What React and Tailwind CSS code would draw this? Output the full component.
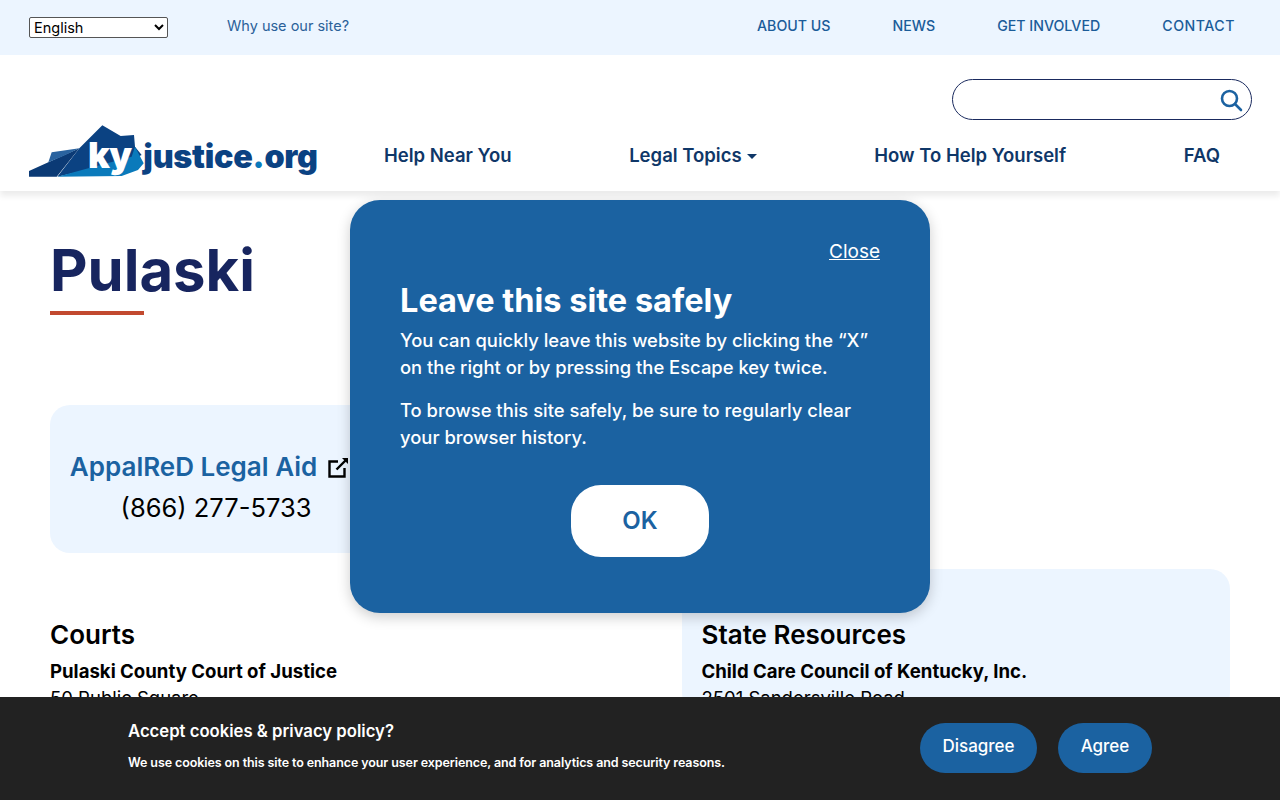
import React from 'react';

const Logo = () => (
    <svg width="292" height="53" viewBox="87 375 876 159" aria-label="kyjustice.org" className="shrink-0">
        {/* state shape */}
        <polygon points="87,530 87,513 145,487 238,445 170,530" fill="#0b3a75" />
        <polygon points="145,487 155,457 238,445 190,468" fill="#2a639f" />
        <polygon points="172,530 238,445 307,376 362,408 402,405 405,440 425,465 350,500 260,510" fill="#0b4282" />
        <polygon points="172,530 265,505 395,470 405,440 431,490 414,510 365,528" fill="#0a7abb" />
        <text x="264" y="505" fontFamily="Inter, sans-serif" fontWeight="900" fontSize="108" letterSpacing="-3" fill="#fff">ky</text>
        <text x="430" y="503" fontFamily="Inter, sans-serif" fontWeight="900" fontSize="97" letterSpacing="-0.8" fill="#0b4282">
            justice<tspan fill="#0a7abb">.</tspan>org
        </text>
    </svg>
);

const SearchIcon = () => (
    <svg width="24" height="24" viewBox="0 0 24 24" fill="none" stroke="#1b62a1" strokeWidth="2.6" strokeLinecap="round">
        <circle cx="10.5" cy="10.5" r="7.5" />
        <path d="M16 16l6 6" />
    </svg>
);

const ExternalIcon = () => (
    <svg width="22" height="22" viewBox="0 0 22 22" fill="none" stroke="#000" strokeWidth="2.4" className="shrink-0">
        <path d="M10 5.5H1.5v15h15V12" />
        <path d="M8.5 13.5 19 3" />
        <path d="M14 2h6v6z" fill="#000" stroke="none" />
    </svg>
);

const topLinks = ['ABOUT US', 'NEWS', 'GET INVOLVED', 'CONTACT'];

export default function App() {
    return (
        <div className="relative h-screen overflow-hidden bg-white font-['Inter',sans-serif] text-black">
            {/* Top bar */}
            <div className="flex h-[55px] items-center justify-between bg-[#ecf5ff] pl-[29px] pr-[45px]">
                <div className="flex items-center gap-[59px]">
                    <select className="mb-[1px] w-[139px] rounded-[2px] border border-[#555] bg-white text-[14.5px] leading-[14px] text-black">
                        <option>English</option>
                    </select>
                    <a className="pb-[3px] text-[14.5px] text-[#2a6199]">Why use our site?</a>
                </div>
                <div className="flex items-center gap-[62px] pb-[3px]">
                    {topLinks.map((t) => (
                        <a key={t} className="text-[14.2px] font-medium text-[#1b5c99] last:tracking-[0.5px]">{t}</a>
                    ))}
                </div>
            </div>

            {/* Header */}
            <header className="relative z-10 bg-white pb-[13px] pl-[29px] pr-[28px] pt-[24px] shadow-[0_5px_6px_rgba(0,0,0,0.08)]">
                <div className="flex justify-end">
                    <div className="flex h-[41px] w-[300px] items-center justify-end rounded-full border border-[#1a2a5e] pr-[8px]">
                        <SearchIcon />
                    </div>
                </div>
                <div className="mt-[5px] flex h-[53px] items-center">
                    <Logo />
                    <nav className="ml-[63px] flex w-[836px] items-center justify-between pt-[9px] text-[18.5px] font-semibold text-[#0f3768]">
                        <a>Help Near You</a>
                        <a className="flex items-center gap-[5px]">
                            Legal Topics
                            <span className="h-0 w-0 border-x-[5px] border-t-[5px] border-x-transparent border-t-[#0f3768]"></span>
                        </a>
                        <a>How To Help Yourself</a>
                        <a>FAQ</a>
                    </nav>
                </div>
            </header>

            {/* Main content */}
            <main className="px-[50px]">
                <h1 className="pt-[49px] text-[58px] font-bold leading-[60px] text-[#17255f]">Pulaski</h1>
                <div className="mt-[11px] h-[4px] w-[94px] bg-[#c2492f]"></div>

                <div className="mt-[90px] flex h-[148px] w-[332px] flex-col items-center justify-center rounded-[20px] bg-[#ecf5ff] pt-[18px]">
                    <div className="mr-[12px] flex items-center gap-[11px]">
                        <a className="text-[26px] font-semibold leading-[32px] text-[#1b62a1]">AppalReD Legal Aid</a>
                        <ExternalIcon />
                    </div>
                    <p className="mt-[7px] text-[25.5px] leading-[36px]">(866) 277-5733</p>
                </div>

                <div className="mt-[16px] grid grid-cols-[632px_548px]">
                    <section className="pt-[51px]">
                        <h2 className="text-[26px] font-semibold leading-[30px]">Courts</h2>
                        <h3 className="mt-[9px] text-[18.6px] font-bold leading-[24px]">Pulaski County Court of Justice</h3>
                        <p className="text-[18.5px] leading-[30px]">50 Public Square</p>
                    </section>
                    <section className="rounded-[20px] bg-[#ecf5ff] pl-[19.5px] pr-[20px] pt-[51px]">
                        <h2 className="text-[26px] font-semibold leading-[30px]">State Resources</h2>
                        <h3 className="mt-[9px] text-[18.6px] font-bold leading-[24px]">Child Care Council of Kentucky, Inc.</h3>
                        <p className="text-[18.5px] leading-[30px]">2501 Sandersville Road</p>
                    </section>
                </div>
            </main>

            {/* Safety modal */}
            <div className="absolute left-[350px] top-[200px] z-20 h-[413px] w-[580px] rounded-[30px] bg-[#1b62a1] px-[50px] pt-[40px] text-white shadow-[0_4px_14px_rgba(0,0,0,0.2)]">
                <div className="flex justify-end">
                    <a className="text-[19px] leading-[24px] underline">Close</a>
                </div>
                <h2 className="mt-[16px] text-[32.5px] font-bold leading-[42px]">Leave this site safely</h2>
                <p className="mt-[5px] whitespace-nowrap text-[18.4px] font-medium leading-[27px]">
                    You can quickly leave this website by clicking the “X”<br />on the right or by pressing the Escape key twice.
                </p>
                <p className="mt-[16px] whitespace-nowrap text-[18.4px] font-medium leading-[27px]">
                    To browse this site safely, be sure to regularly clear<br />your browser history.
                </p>
                <div className="mt-[34px] flex justify-center">
                    <button className="h-[72px] w-[138px] rounded-[30px] bg-white text-[24px] font-semibold text-[#1b62a1]">OK</button>
                </div>
            </div>

            {/* Cookie bar */}
            <div className="absolute inset-x-0 bottom-0 z-30 flex h-[103px] items-start justify-between bg-[#222222] px-[128px] text-white">
                <div className="pt-[22px]">
                    <h4 className="text-[16.7px] font-semibold leading-[24px]">Accept cookies &amp; privacy policy?</h4>
                    <p className="mt-[10px] text-[12.5px] font-semibold leading-[20px] tracking-[-0.1px]">We use cookies on this site to enhance your user experience, and for analytics and security reasons.</p>
                </div>
                <div className="flex gap-[21px] pt-[26px]">
                    <button className="h-[50px] w-[117px] rounded-full bg-[#1b62a1] pb-[3px] text-[17px] font-medium">Disagree</button>
                    <button className="h-[50px] w-[94px] rounded-full bg-[#1b62a1] pb-[3px] text-[17px] font-medium">Agree</button>
                </div>
            </div>
        </div>
    );
}
